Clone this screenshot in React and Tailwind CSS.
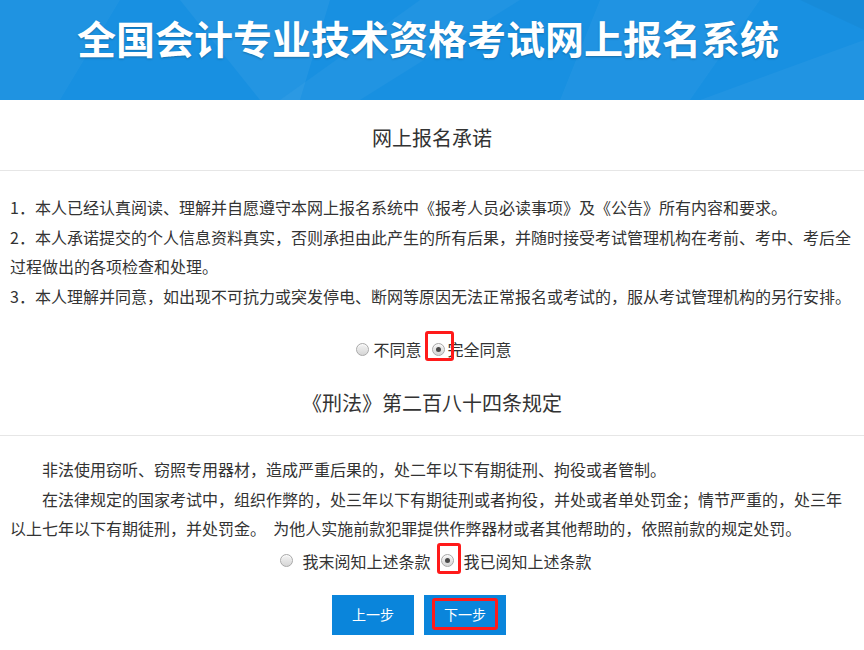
import React from "react";

const font = { fontFamily: '"Noto Sans CJK SC", "Microsoft YaHei", sans-serif' };

function Radio({ checked }) {
  return (
    <span className="inline-flex h-[13px] w-[13px] items-center justify-center rounded-full border border-[#a9a9a9] bg-gradient-to-b from-[#f4f4f4] to-[#d6d6d6] shadow-[inset_0_1px_1px_rgba(255,255,255,0.8)]">
      {checked && <span className="h-[5px] w-[5px] rounded-full bg-[#4a4a4a]" />}
    </span>
  );
}

const para2 =
  "在法律规定的国家考试中，组织作弊的，处三年以下有期徒刑或者拘役，并处或者单处罚金；情节严重的，处三年以上七年以下有期徒刑，并处罚金。\u00a0 为他人实施前款犯罪提供作弊器材或者其他帮助的，依照前款的规定处罚。";

export default function App() {
  return (
    <div className="min-h-[650px] w-full bg-white text-[#333]" style={font}>
      {/* Header */}
      <div className="relative h-[100px] overflow-hidden bg-[#1890e1]">
        <svg className="absolute inset-0 h-full w-full" viewBox="0 0 864 100" preserveAspectRatio="none">
          <polygon points="0,0 120,0 60,100 0,100" fill="#ffffff" opacity="0.03" />
          <polygon points="180,0 330,0 300,100 260,100" fill="#ffffff" opacity="0.05" />
          <polygon points="280,100 420,0 520,0 360,100" fill="#ffffff" opacity="0.04" />
          <polygon points="600,0 760,0 690,100 560,100" fill="#ffffff" opacity="0.035" />
          <polygon points="700,100 864,40 864,100" fill="#ffffff" opacity="0.04" />
          <polygon points="800,0 864,0 864,30" fill="#000000" opacity="0.03" />
        </svg>
        <div className="relative flex h-full justify-center pr-[8px] pt-[15px]">
          <h1 className="text-[39px] font-bold leading-[44px] text-white [text-shadow:0_1px_2px_rgba(0,0,0,0.25)]">
            全国会计专业技术资格考试网上报名系统
          </h1>
        </div>
      </div>

      {/* Section 1 */}
      <div className="border-b border-[#e6e6e6] pb-[21px] pt-[27px] text-center text-[20px] leading-[22px]">
        网上报名承诺
      </div>
      <div className="px-[10px] pt-[22px] text-[16px] leading-[29.5px]">
        <p>1．本人已经认真阅读、理解并自愿遵守本网上报名系统中《报考人员必读事项》及《公告》所有内容和要求。</p>
        <p>2．本人承诺提交的个人信息资料真实，否则承担由此产生的所有后果，并随时接受考试管理机构在考前、考中、考后全过程做出的各项检查和处理。</p>
        <p>3．本人理解并同意，如出现不可抗力或突发停电、断网等原因无法正常报名或考试的，服从考试管理机构的另行安排。</p>
      </div>

      <div className="mt-[26px] flex h-[24px] items-center justify-center pl-[4px] text-[16px]">
        <span className="flex items-center">
          <Radio />
          <span className="ml-[4px]">不同意</span>
        </span>
        <span className="ml-[10px] flex items-center">
          <span className="relative flex items-center">
            <Radio checked />
            <span className="absolute left-[-7px] top-[-12px] h-[30px] w-[29px] rounded-[3px] border-[3px] border-[#ff1a1a]" />
          </span>
          <span className="ml-[3px]">完全同意</span>
        </span>
      </div>

      {/* Section 2 */}
      <div className="mt-[31px] border-b border-[#e6e6e6] pb-[21px] text-center text-[20px] leading-[22px]">
        《刑法》第二百八十四条规定
      </div>
      <div className="px-[10px] pt-[19px] text-[16px] leading-[29.5px]">
        <p className="indent-[2em]">非法使用窃听、窃照专用器材，造成严重后果的，处二年以下有期徒刑、拘役或者管制。</p>
        <p className="indent-[2em]">{para2}</p>
      </div>

      <div className="mt-[5px] flex h-[24px] items-center justify-center pl-[8px] text-[16px]">
        <span className="flex items-center">
          <Radio />
          <span className="ml-[9px]">我末阅知上述条款</span>
        </span>
        <span className="ml-[10px] flex items-center">
          <span className="relative flex items-center">
            <Radio checked />
            <span className="absolute left-[-4px] top-[-11px] h-[31px] w-[24px] rounded-[3px] border-[3px] border-[#ff1a1a]" />
          </span>
          <span className="ml-[10px]">我已阅知上述条款</span>
        </span>
      </div>

      <div className="mt-[22px] flex justify-center gap-[10px] pb-[14px] pr-[26px]">
        <button className="flex h-[40px] w-[82px] items-center justify-center bg-[#0a85db] text-[14px] text-white">
          上一步
        </button>
        <button className="relative flex h-[40px] w-[82px] items-center justify-center bg-[#0a85db] text-[14px] text-white">
          <span className="absolute left-[8px] top-[3px] h-[32px] w-[66px] rounded-[3px] border-[3px] border-[#ff1a1a]" />
          下一步
        </button>
      </div>
    </div>
  );
}
